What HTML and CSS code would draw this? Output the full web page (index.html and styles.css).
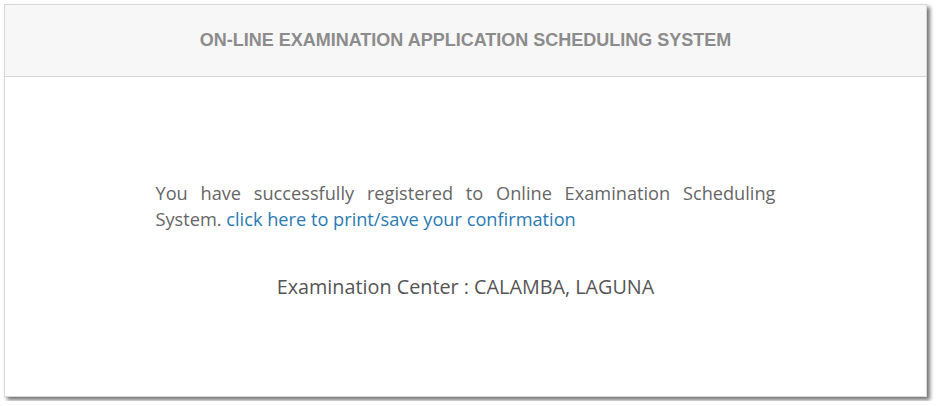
FILE: index.html
```html
<!DOCTYPE html>
<html>
<head>
<meta charset="utf-8">
<link rel="stylesheet" href="styles.css">
</head>
<body>
<div class="panel">
  <div class="panel-heading">ON-LINE EXAMINATION APPLICATION SCHEDULING SYSTEM</div>
  <div class="panel-body">
    <p class="message">You have successfully registered to Online Examination Scheduling System. <a href="#" class="link">click here to print/save your confirmation</a></p>
    <p class="center">Examination Center : CALAMBA, LAGUNA</p>
  </div>
</div>
</body>
</html>
```
FILE: styles.css
```css
html, body { margin: 0; padding: 0; background: #fff; }
body { padding: 4px; font-family: "Open Sans", "Lato", sans-serif; }
.panel {
  width: 921px;
  height: 391px;
  border: 1px solid #d8d8d8;
  background: #fff;
  box-shadow: 3px 3px 4px rgba(0,0,0,0.55);
  display: flex;
  flex-direction: column;
}
.panel-heading {
  height: 71px;
  background: #f7f7f7;
  border-bottom: 1px solid #d6d6d6;
  display: flex;
  align-items: center;
  justify-content: center;
  font-family: "Liberation Sans", Arial, sans-serif;
  font-weight: bold;
  font-size: 18px;
  color: #8c8c8c;
}
.panel-body {
  flex: 1;
  display: flex;
  flex-direction: column;
  align-items: center;
  padding-top: 103px;
}
.message {
  width: 620px;
  margin: 0;
  text-align: justify;
  font-size: 18.2px;
  line-height: 26px;
  color: #666;
}
.link { color: #2a7ab3; text-decoration: none; }
.center {
  margin: 41px 0 0;
  font-size: 19.8px;
  color: #555;
}
```
